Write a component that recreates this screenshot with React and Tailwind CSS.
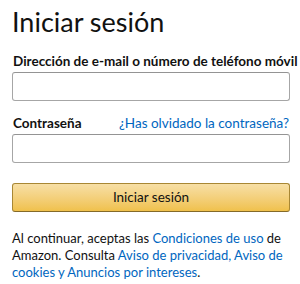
export default function App() {
  return (
    <div className="w-[300px] h-[284px] bg-white px-[12px] pt-[4px] text-[#111]" style={{fontFamily: 'Lato, "Noto Sans", sans-serif'}}>
      <h1 className="text-[27px] leading-[36px] font-normal">Iniciar sesión</h1>
      <div className="mt-[12px] text-[13.5px] leading-[19px] font-bold pl-[1px] whitespace-nowrap">Dirección de e-mail o número de teléfono móvil</div>
      <div className="mt-[1px] h-[29px] w-[278px] rounded-[3px] border border-[#a6a6a6] border-t-[#949494]"></div>
      <div className="mt-[13px] flex items-baseline justify-between w-[278px]">
        <span className="text-[13.5px] leading-[19px] font-bold pl-[1px]">Contraseña</span>
        <span className="text-[13.5px] leading-[19px] text-[#0066c0] pr-[1px]">¿Has olvidado la contraseña?</span>
      </div>
      <div className="mt-[1px] h-[29px] w-[278px] rounded-[3px] border border-[#a6a6a6] border-t-[#949494]"></div>
      <div className="mt-[20px] h-[29px] w-[278px] rounded-[3px] border border-[#a88734] border-b-[#846a29] bg-gradient-to-b from-[#f7dfa5] to-[#f0c14b] flex items-center justify-center text-[13.5px] text-[#111]">Iniciar sesión</div>
      <p className="mt-[18px] text-[13px] leading-[17px]">
        Al continuar, aceptas las <span className="text-[#0066c0]">Condiciones de uso</span> de Amazon. Consulta <span className="text-[#0066c0]">Aviso de privacidad, Aviso de cookies y Anuncios por intereses</span>.
      </p>
    </div>
  );
}
